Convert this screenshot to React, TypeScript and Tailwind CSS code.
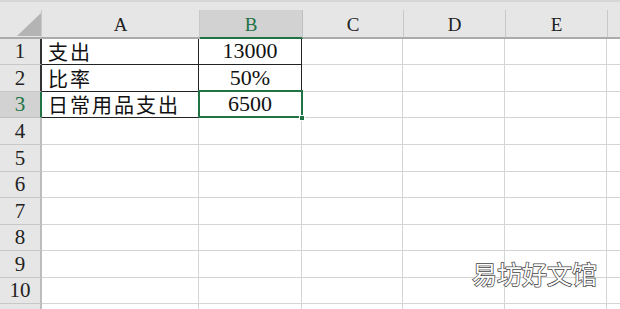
import React from "react";

const cols = ["A", "B", "C", "D", "E", ""];
const rowHeights = [26, 27, 26, 27, 27, 26, 27, 26, 27, 26, 20];

const serif = "[font-family:'Liberation_Serif','Times_New_Roman',serif]";
const cjk = "[font-family:'Noto_Sans_CJK_SC','Noto_Sans',sans-serif]";

const data: Record<number, [string, string]> = {
  1: ["支出", "13000"],
  2: ["比率", "50%"],
  3: ["日常用品支出", "6500"],
};

export default function App() {
  return (
    <div className="relative w-[620px] h-[309px] overflow-hidden bg-white">
      {/* top strip */}
      <div className="h-[10px] bg-[#e6e6e6] border-t-[2px] border-[#d6d6d6]" />
      {/* header row */}
      <div className="flex h-[29px] bg-[#e6e6e6] border-b-[2px] border-[#ababab]">
        <div className="relative w-[42px] shrink-0 border-r border-[#c8c8c8]">
          <svg className="absolute left-[17px] top-[3px]" width="24" height="23" viewBox="0 0 24 23">
            <polygon points="24,0 24,23 0,23" fill="#b4b4b4" />
          </svg>
        </div>
        {cols.map((c, i) => {
          const w = [158, 103, 101, 102, 102, 40][i];
          const sel = c === "B";
          return (
            <div
              key={i}
              style={{ width: w }}
              className={`shrink-0 flex items-end justify-center pb-[3px] border-r ${serif} text-[19px] leading-none ${
                sel ? "bg-[#d2d2d2] text-[#217346] border-[#c0c0c0] -mb-[2px] border-b-[2px] border-b-[#217346]" : "text-[#222] border-[#c8c8c8]"
              }`}
            >
              {c}
            </div>
          );
        })}
      </div>
      {/* body rows */}
      {rowHeights.map((h, ri) => {
        const r = ri + 1;
        const d = data[r];
        const inBlock = r <= 3;
        const sel = r === 3;
        return (
          <div key={r} className="flex" style={{ height: h }}>
            <div
              className={`w-[42px] shrink-0 flex items-end justify-center pb-[2px] ${serif} text-[21px] leading-none border-b border-r-[2px] ${
                sel
                  ? "bg-[#d2d2d2] text-[#217346] border-b-[#c0c0c0] border-r-[#217346]"
                  : inBlock
                  ? "bg-[#e6e6e6] text-[#222] border-b-[#c8c8c8] border-r-[#333]"
                  : "bg-[#e6e6e6] text-[#222] border-b-[#c8c8c8] border-r-[#bdbdbd]"
              }`}
            >
              {r <= 10 ? r : ""}
            </div>
            {/* A */}
            <div
              className={`w-[157px] shrink-0 flex items-end pl-[6px] pb-[2px] border-b border-r ${cjk} text-[20px] tracking-[2px] leading-none text-[#111] ${
                inBlock ? "border-[#222]" : "border-[#d4d4d4]"
              }`}
            >
              {d ? d[0] : ""}
            </div>
            {/* B */}
            <div
              className={`w-[103px] shrink-0 flex items-end justify-center pb-[2px] border-b border-r ${serif} text-[22px] leading-none text-[#111] ${
                inBlock ? "border-[#222]" : "border-[#d4d4d4]"
              }`}
            >
              {d ? d[1] : ""}
            </div>
            <div className="w-[101px] shrink-0 border-b border-r border-[#d4d4d4]" />
            <div className="w-[102px] shrink-0 border-b border-r border-[#d4d4d4]" />
            <div className="w-[102px] shrink-0 border-b border-r border-[#d4d4d4]" />
            <div className="w-[40px] shrink-0 border-b border-r border-[#d4d4d4]" />
          </div>
        );
      })}
      {/* selection B3 */}
      <div className="absolute left-[198px] top-[90px] w-[105px] h-[28px] border-[2px] border-[#217346]" />
      <div className="absolute left-[299px] top-[115px] w-[6px] h-[6px] bg-[#217346] border border-white" />
      {/* watermark */}
      <div
        className={`absolute left-[472px] top-[261px] ${cjk} text-[25px] leading-none text-white [-webkit-text-stroke:1.5px_#444] [paint-order:stroke_fill]`}
      >
        易坊好文馆
      </div>
    </div>
  );
}
